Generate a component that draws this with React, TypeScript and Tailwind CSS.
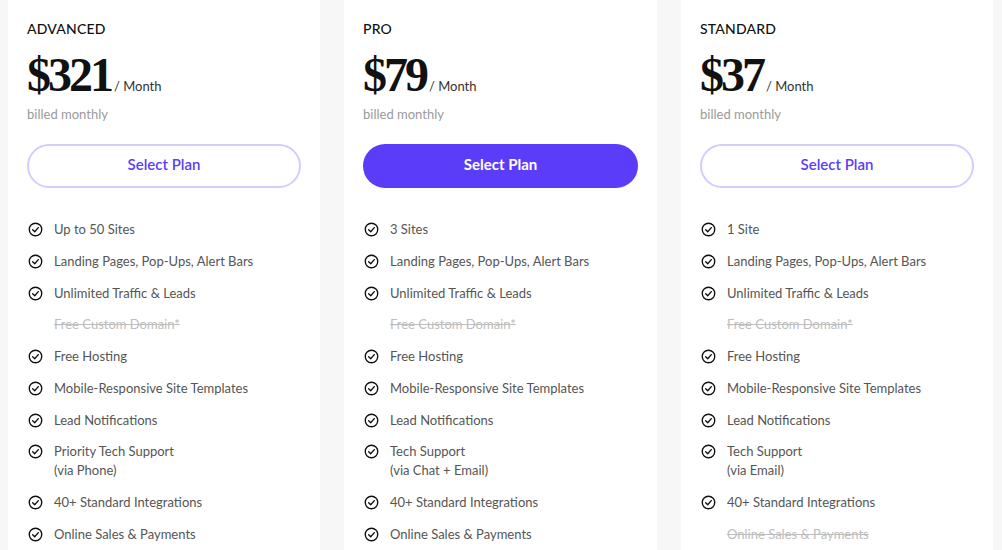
import React from "react";

type Feature = { text: string; sub?: string; off?: boolean };
type Plan = { name: string; price: string; filled?: boolean; w: string; features: Feature[] };

const common = (support: Feature, sales: boolean, sites: string): Feature[] => [
  { text: sites },
  { text: "Landing Pages, Pop-Ups, Alert Bars" },
  { text: "Unlimited Traffic & Leads" },
  { text: "Free Custom Domain*", off: true },
  { text: "Free Hosting" },
  { text: "Mobile-Responsive Site Templates" },
  { text: "Lead Notifications" },
  support,
  { text: "40+ Standard Integrations" },
  { text: "Online Sales & Payments", off: !sales },
];

const plans: Plan[] = [
  {
    name: "ADVANCED",
    price: "$321",
    w: "w-[312px]",
    features: common({ text: "Priority Tech Support", sub: "(via Phone)" }, true, "Up to 50 Sites"),
  },
  {
    name: "PRO",
    price: "$79",
    filled: true,
    w: "w-[313px]",
    features: common({ text: "Tech Support", sub: "(via Chat + Email)" }, true, "3 Sites"),
  },
  {
    name: "STANDARD",
    price: "$37",
    w: "w-[312px]",
    features: common({ text: "Tech Support", sub: "(via Email)" }, false, "1 Site"),
  },
];

function Check() {
  return (
    <svg width="15" height="15" viewBox="0 0 24 24" fill="none" stroke="#111" strokeWidth="2.2" strokeLinecap="round" strokeLinejoin="round" className="shrink-0 mt-[2px]">
      <circle cx="12" cy="12" r="10" />
      <polyline points="7.5 12.5 10.7 15.5 16.5 9" />
    </svg>
  );
}

function Card({ plan }: { plan: Plan }) {
  return (
    <div className={`${plan.w} shrink-0 bg-white px-[19px] pt-[19px]`}>
      <div className="text-[14px] leading-[20px] text-[#111] font-medium tracking-[0.2px]">{plan.name}</div>
      <div className="mt-[12px] flex items-baseline">
        <span className="text-[48px] leading-[48px] font-bold text-[#111] tracking-[-3px]" style={{ fontFamily: '"Liberation Serif", serif' }}>
          {plan.price}
        </span>
        <span className="ml-[3px] text-[13px] text-[#333]">/ Month</span>
      </div>
      <div className="mt-[5px] text-[13px] leading-[20px] text-[#9a9a9a]">billed monthly</div>
      <button
        className={
          plan.filled
            ? "mt-[20px] w-full h-[44px] pb-[4px] rounded-full bg-[#5b3df9] text-white text-[15px] font-bold"
            : "mt-[20px] w-full h-[44px] pb-[4px] rounded-full border-2 border-[#d6ccfb] bg-white text-[#5b3df9] text-[15px] font-semibold"
        }
      >
        Select Plan
      </button>
      <ul className="mt-[32px] flex flex-col gap-[12.75px]">
        {plan.features.map((f, i) => (
          <li key={i} className="flex items-start gap-[11px] pl-[1px] text-[13px] leading-[19px]">
            {f.off ? <span className="w-[15px] shrink-0" /> : <Check />}
            <div className={f.off ? "text-[#bdbdbd] line-through" : "text-[#555]"}>
              <div>{f.text}</div>
              {f.sub && <div>{f.sub}</div>}
            </div>
          </li>
        ))}
      </ul>
    </div>
  );
}

export default function App() {
  return (
    <div className="h-[550px] w-[1002px] overflow-hidden bg-[#f7f7f7] flex gap-6 pl-2" style={{ fontFamily: 'Lato, "Liberation Sans", sans-serif' }}>
      {plans.map((p) => (
        <Card key={p.name} plan={p} />
      ))}
    </div>
  );
}
